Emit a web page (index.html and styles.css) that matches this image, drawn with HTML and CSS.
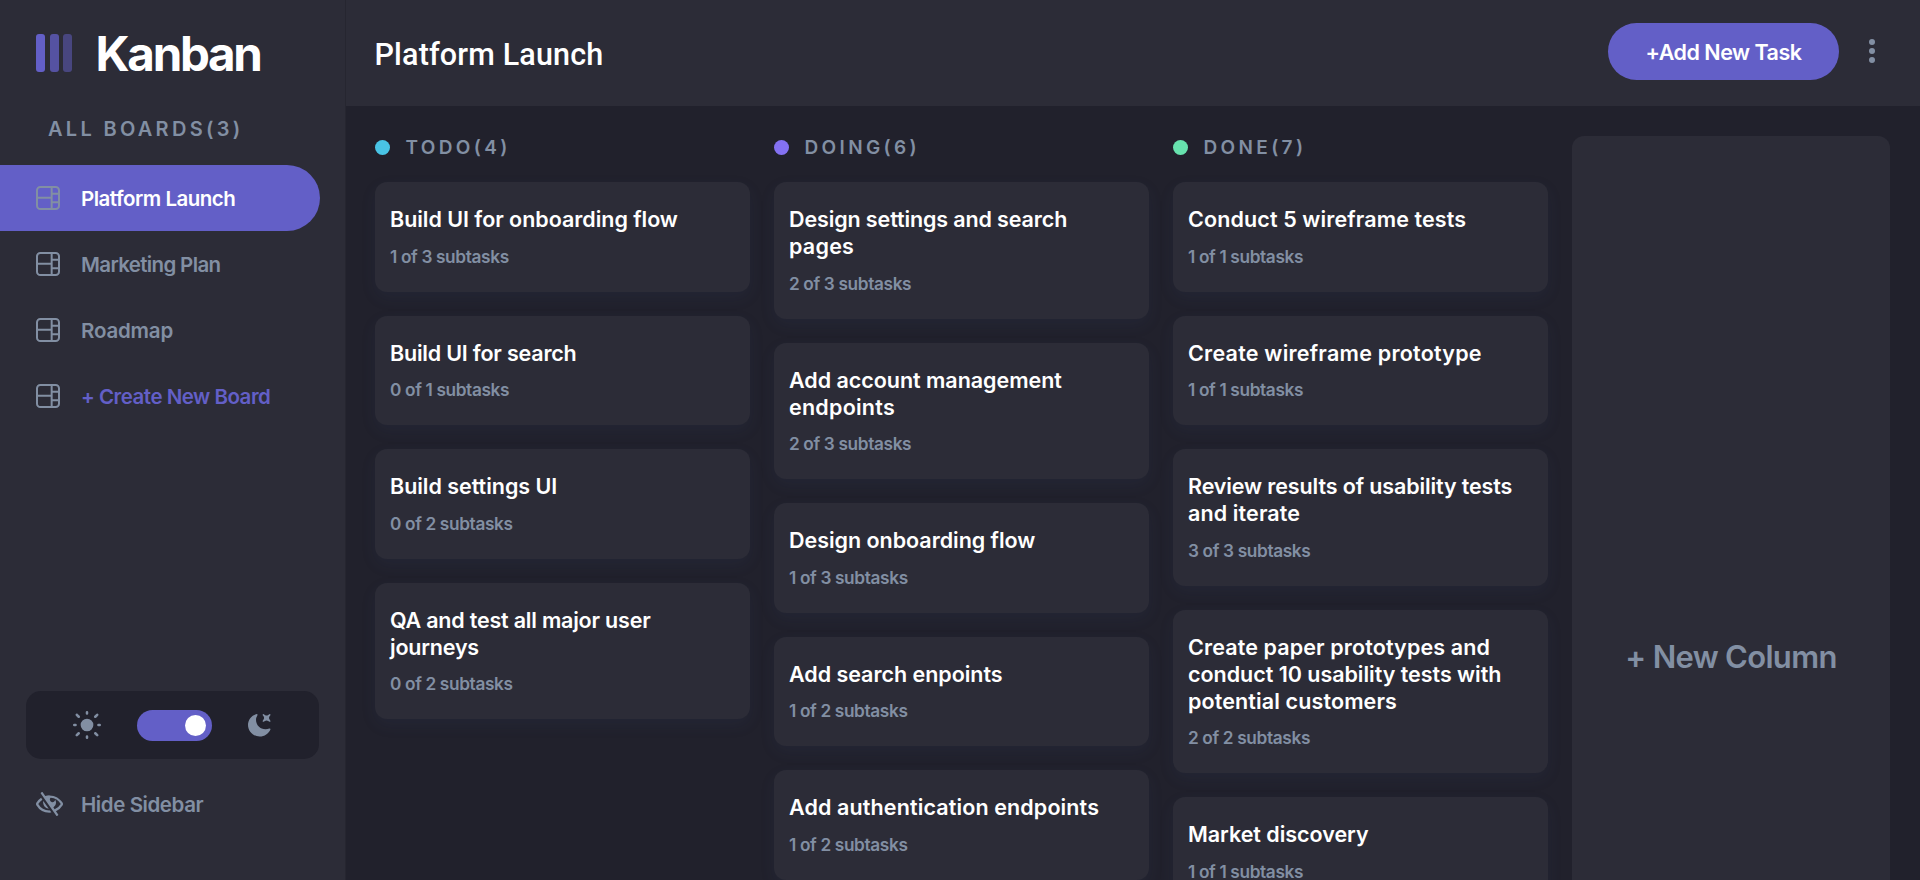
FILE: index.html
```html
<!DOCTYPE html>
<html lang="en">
<head>
<meta charset="utf-8">
<title>Kanban</title>
<link rel="stylesheet" href="styles.css">
</head>
<body>
<svg class="sprite" aria-hidden="true">
  <symbol id="board" viewBox="0 0 16 16"><path d="M0 2.889A2.889 2.889 0 0 1 2.889 0H13.11A2.889 2.889 0 0 1 16 2.889V13.11A2.888 2.888 0 0 1 13.111 16H2.89A2.889 2.889 0 0 1 0 13.111V2.89Zm1.333 5.555v4.667c0 .859.697 1.556 1.556 1.556h6.889V8.444H1.333Zm8.445-1.333V1.333h-6.89A1.556 1.556 0 0 0 1.334 2.89V7.11h8.445Zm4.889-1.333H11.11v4.444h3.556V5.778Zm0 5.778H11.11v3.11h2a1.556 1.556 0 0 0 1.556-1.555v-1.555Zm0-7.112V2.89a1.555 1.555 0 0 0-1.556-1.556h-2v3.111h3.556Z"/></symbol>
</svg>
<div class="app">
  <aside class="sidebar">
    <div class="brand">
      <div class="bars"><span class="bar"></span><span class="bar bar-mid"></span><span class="bar bar-low"></span></div>
      <span class="brand-name">Kanban</span>
    </div>
    <h2 class="boards-title">ALL BOARDS(3)</h2>
    <nav class="boards">
      <a class="board-link active"><svg class="board-icon"><use href="#board"/></svg>Platform Launch</a>
      <a class="board-link marketing"><svg class="board-icon"><use href="#board"/></svg>Marketing Plan</a>
      <a class="board-link roadmap"><svg class="board-icon"><use href="#board"/></svg>Roadmap</a>
      <a class="board-link create"><svg class="board-icon"><use href="#board"/></svg>+ Create New Board</a>
    </nav>
    <div class="theme">
      <svg class="sun" viewBox="0 0 18.333 18.333"><path d="M9.167 15.833a.833.833 0 0 1 .833.834v.833a.833.833 0 0 1-1.667 0v-.833a.833.833 0 0 1 .834-.834ZM3.75 13.75a.833.833 0 0 1 .59 1.422l-1.25 1.25a.833.833 0 0 1-1.18-1.178l1.25-1.25a.833.833 0 0 1 .59-.244Zm10.833 0c.221 0 .433.088.59.244l1.25 1.25a.833.833 0 0 1-1.179 1.178l-1.25-1.25a.833.833 0 0 1 .59-1.422ZM9.167 5a4.167 4.167 0 1 1 0 8.334 4.167 4.167 0 0 1 0-8.334Zm-7.5 3.333a.833.833 0 0 1 0 1.667H.833a.833.833 0 1 1 0-1.667h.834Zm15.833 0a.833.833 0 0 1 0 1.667h-.833a.833.833 0 0 1 0-1.667h.833Zm-1.667-6.666a.833.833 0 0 1 .59 1.422l-1.25 1.25a.833.833 0 1 1-1.179-1.178l1.25-1.25a.833.833 0 0 1 .59-.244Zm-13.333 0c.221 0 .433.088.59.244l1.25 1.25a.833.833 0 0 1-1.18 1.178L1.91 3.09a.833.833 0 0 1 .59-1.422ZM9.167 0A.833.833 0 0 1 10 .833v.834a.833.833 0 1 1-1.667 0V.833A.833.833 0 0 1 9.167 0Z"/></svg>
      <div class="switch"><span class="knob"></span></div>
      <svg class="moon" viewBox="0 0 16 16"><path d="M6.474.682c.434-.11.718.406.481.78A6.067 6.067 0 0 0 6.01 4.72c0 3.418 2.827 6.187 6.314 6.187.89.002 1.77-.182 2.584-.54.408-.18.894.165.724.57-1.16 2.775-3.944 4.73-7.194 4.73-4.292 0-7.771-3.41-7.771-7.615 0-3.541 2.466-6.518 5.807-7.37Zm8.433.07c.442-.294.969.232.674.674l-.525.787a1.943 1.943 0 0 0 0 2.157l.525.788c.295.441-.232.968-.674.673l-.787-.525a1.943 1.943 0 0 0-2.157 0l-.786.525c-.442.295-.97-.232-.675-.673l.525-.788a1.943 1.943 0 0 0 0-2.157l-.525-.787c-.295-.442.232-.968.674-.673l.787.525a1.943 1.943 0 0 0 2.157 0l.787-.525Z"/></svg>
    </div>
    <a class="hide"><svg class="hide-icon" viewBox="0 0 18 16"><path d="M8.522 11.223a4.252 4.252 0 0 1-3.654-5.22l3.654 5.22ZM9 12.25A8.685 8.685 0 0 1 1.5 8a8.612 8.612 0 0 1 2.76-2.864l-.86-1.23A10.112 10.112 0 0 0 .208 7.238a1.5 1.5 0 0 0 0 1.524A10.187 10.187 0 0 0 9 13.75c.414 0 .828-.025 1.239-.074l-1-1.43A8.88 8.88 0 0 1 9 12.25Zm8.792-3.488a10.14 10.14 0 0 1-4.486 4.046l1.504 2.148a.375.375 0 0 1-.092.523l-.648.453a.375.375 0 0 1-.523-.092L3.19 1.044A.375.375 0 0 1 3.282.52L3.93.068a.375.375 0 0 1 .523.092l1.735 2.479A10.308 10.308 0 0 1 9 2.25c3.746 0 7.031 2 8.792 4.988a1.5 1.5 0 0 1 0 1.524ZM16.5 8a8.674 8.674 0 0 0-6.755-4.219A1.75 1.75 0 1 0 12.75 5v-.001a4.25 4.25 0 0 1-1.154 5.366l.834 1.192A8.641 8.641 0 0 0 16.5 8Z"/></svg>Hide Sidebar</a>
  </aside>
  <div class="content">
    <header class="header">
      <h1 class="title">Platform Launch</h1>
      <button class="add">+Add New Task</button>
      <svg class="menu" viewBox="0 0 6 24"><circle cx="3" cy="3" r="3"/><circle cx="3" cy="12" r="3"/><circle cx="3" cy="21" r="3"/></svg>
    </header>
    <main class="columns">
      <section class="column">
        <h3 class="column-title"><span class="dot todo"></span>TODO(4)</h3>
        <article class="card"><h4 class="task">Build UI for onboarding flow</h4><p class="sub">1 of 3 subtasks</p></article>
        <article class="card"><h4 class="task tighter">Build UI for search</h4><p class="sub">0 of 1 subtasks</p></article>
        <article class="card"><h4 class="task">Build settings UI</h4><p class="sub">0 of 2 subtasks</p></article>
        <article class="card"><h4 class="task tighter">QA and test all major user<br>journeys</h4><p class="sub">0 of 2 subtasks</p></article>
      </section>
      <section class="column">
        <h3 class="column-title"><span class="dot doing"></span>DOING(6)</h3>
        <article class="card"><h4 class="task"><span class="tight">Design settings and search</span><br><span class="wider">pages</span></h4><p class="sub">2 of 3 subtasks</p></article>
        <article class="card"><h4 class="task">Add account management<br><span class="wider">endpoints</span></h4><p class="sub">2 of 3 subtasks</p></article>
        <article class="card"><h4 class="task">Design onboarding flow</h4><p class="sub">1 of 3 subtasks</p></article>
        <article class="card"><h4 class="task">Add search enpoints</h4><p class="sub">1 of 2 subtasks</p></article>
        <article class="card"><h4 class="task wide">Add authentication endpoints</h4><p class="sub">1 of 2 subtasks</p></article>
      </section>
      <section class="column">
        <h3 class="column-title"><span class="dot done"></span>DONE(7)</h3>
        <article class="card"><h4 class="task wide">Conduct 5 wireframe tests</h4><p class="sub">1 of 1 subtasks</p></article>
        <article class="card"><h4 class="task wider">Create wireframe prototype</h4><p class="sub">1 of 1 subtasks</p></article>
        <article class="card"><h4 class="task"><span class="tight">Review results of usability tests</span><br><span class="wide">and iterate</span></h4><p class="sub">3 of 3 subtasks</p></article>
        <article class="card"><h4 class="task"><span class="wide">Create paper prototypes and</span><br>conduct 10 usability tests with<br><span class="wide">potential customers</span></h4><p class="sub">2 of 2 subtasks</p></article>
        <article class="card"><h4 class="task">Market discovery</h4><p class="sub">1 of 1 subtasks</p></article>
      </section>
      <button class="new-column">+ New Column</button>
    </main>
  </div>
</div>
</body>
</html>
```
FILE: styles.css
```css
* { box-sizing: border-box; }
body { margin: 0; font-family: Inter, "Open Sans", sans-serif; background: #21212c; color: #fff; }
h1, h2, h3, h4, p { margin: 0; }
button { border: 0; padding: 0; font-family: inherit; }
.sprite { display: none; }
.app { display: flex; height: 880px; overflow: hidden; }

.sidebar { flex: none; width: 346px; display: flex; flex-direction: column; background: #2c2c37; border-right: 1px solid #262630; }
.brand { display: flex; align-items: flex-start; padding: 34px 0 0 36px; height: 114px; }
.bars { display: flex; gap: 4.5px; width: 36px; height: 38px; }
.bar { flex: 1; border-radius: 3px; background: #635fc7; }
.bar-mid { opacity: .75; }
.bar-low { opacity: .5; }
.brand-name { margin: -10px 0 0 23.5px; font-size: 47.5px; line-height: 60px; font-weight: 700; letter-spacing: -2.3px; }
.boards-title { padding-left: 48px; height: 51px; font-size: 20px; line-height: 30px; font-weight: 600; letter-spacing: 3.3px; color: #828fa3; }
.board-link { display: flex; align-items: center; gap: 21px; width: 320px; height: 66px; padding-left: 36px; font-size: 20.5px; font-weight: 600; letter-spacing: -.5px; color: #828fa3; }
.board-icon { width: 24px; height: 24px; fill: #828fa3; }
.active { background: #635fc7; color: #fff; border-radius: 0 33px 33px 0; }
.marketing { letter-spacing: -.65px; }
.roadmap { letter-spacing: -.2px; }
.create { color: #635fc7; }
.theme { display: flex; align-items: center; width: 293px; height: 68px; margin: auto 0 0 26px; padding-left: 47px; border-radius: 15px; background: #21212c; }
.sun { width: 28px; height: 28px; margin-bottom: 1px; fill: #828fa3; }
.switch { display: flex; align-items: center; justify-content: flex-end; width: 75px; height: 31px; margin: 1px 35px 0 36px; padding: 0 6px 1px 0; border-radius: 16px; background: #635fc7; }
.knob { width: 21px; height: 21px; border-radius: 50%; background: #fff; }
.moon { width: 24px; height: 24px; fill: #828fa3; }
.hide { display: flex; align-items: center; gap: 18px; height: 40px; margin: 25px 0 56px; padding-left: 36px; font-size: 20.5px; font-weight: 600; letter-spacing: -.42px; color: #828fa3; }
.hide-icon { width: 27px; height: 24px; fill: #828fa3; }

.content { flex: 1; min-width: 0; }
.header { display: flex; align-items: center; height: 106px; padding: 0 45px 0 28.5px; background: #2c2c37; }
.title { flex: 1; margin-top: 3px; font: 500 30.5px/40px Roboto, sans-serif; letter-spacing: .15px; }
.add { width: 231px; height: 57px; margin-bottom: 3px; border-radius: 29px; background: #635fc7; color: #fff; font-size: 21.5px; font-weight: 600; letter-spacing: -.5px; }
.menu { width: 6px; height: 24px; margin: 0 0 4px 30px; fill: #828fa3; }

.columns { display: flex; align-items: flex-start; gap: 24px; padding: 30px 30px 0 29px; }
.column { display: flex; flex-direction: column; gap: 24px; flex: none; width: 375px; }
.column-title { display: flex; align-items: center; gap: 15.5px; height: 22px; padding-top: 1px; font-size: 19px; line-height: 22px; font-weight: 600; letter-spacing: 3.35px; color: #828fa3; }
.dot { width: 15px; height: 15px; margin-bottom: 1px; border-radius: 50%; }
.todo { background: #49c4e5; }
.doing { background: #8471f2; }
.done { background: #67e2ae; }
.card { padding: 24px 15px; border-radius: 12px; background: #2c2c37; box-shadow: 0 6px 15px rgba(54, 78, 126, .1); }
.task { font-size: 21.5px; line-height: 27px; font-weight: 600; letter-spacing: -.03px; white-space: nowrap; }
.tighter { letter-spacing: -.2px; }
.tight { letter-spacing: -.12px; }
.wide { letter-spacing: .12px; }
.wider { letter-spacing: .24px; }
.sub { margin-top: 11.5px; font-size: 17.25px; line-height: 23.1px; font-weight: 600; letter-spacing: -.36px; color: #828fa3; }
.new-column { flex: none; width: 318px; height: 1040px; border-radius: 12px; background: #2c2c37; color: #828fa3; font-size: 31px; font-weight: 600; letter-spacing: -.69px; }
```
